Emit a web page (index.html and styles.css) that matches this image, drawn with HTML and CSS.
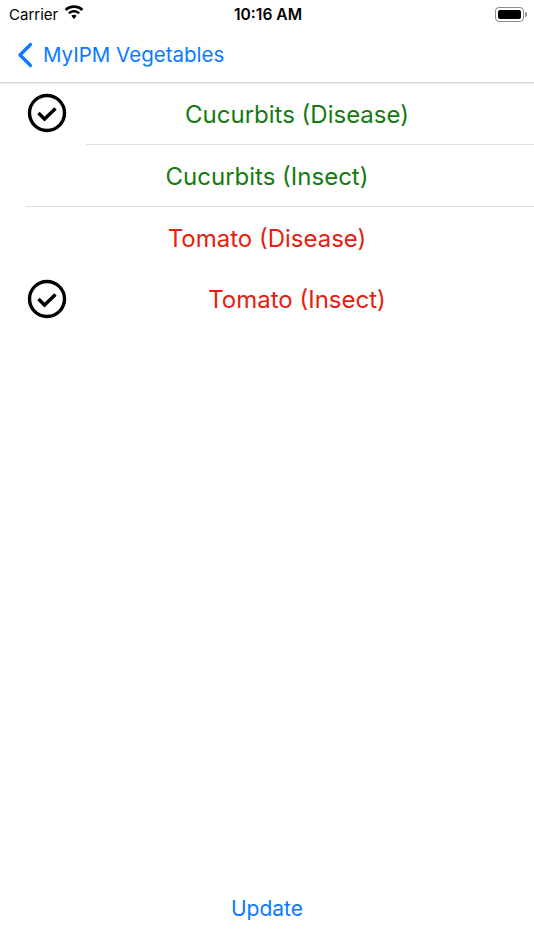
FILE: index.html
```html
<!DOCTYPE html>
<html lang="en">
<head>
    <meta charset="UTF-8">
    <meta name="viewport" content="width=device-width, initial-scale=1.0">
    <title>MyIPM Vegetables</title>
    <link rel="stylesheet" href="styles.css">
</head>
<body>
    <div class="screen">
        <!-- Status bar -->
        <div class="status-bar">
            <div class="status-left">
                <span class="carrier">Carrier</span>
                <svg class="wifi" width="20" height="15" viewBox="0 0 20 14">
                    <path d="M10 2.400c2.900 0 5.500 1.100 7.400 3l1.900-1.900C16.900 1.100 13.600-.2 10-.2S3.100 1.100.7 3.500l1.900 1.900c1.900-1.900 4.500-3 7.400-3z" fill="#000"/>
                    <path d="M10 7c1.600 0 3.100.6 4.200 1.700l1.800-1.900C14.400 5.300 12.300 4.400 10 4.400s-4.400.9-6 2.400l1.800 1.900C6.900 7.600 8.400 7 10 7z" fill="#000"/>
                    <path d="M10 9.200c-1 0-1.900.4-2.600 1L10 13.800l2.600-3.600c-.7-.6-1.600-1-2.600-1z" fill="#000"/>
                </svg>
            </div>
            <span class="clock">10:16 AM</span>
            <div class="battery">
                <div class="battery-body"><div class="battery-fill"></div></div>
                <div class="battery-cap"></div>
            </div>
        </div>

        <!-- Nav bar -->
        <div class="nav-bar">
            <svg class="back-icon" width="16" height="26" viewBox="0 0 16 26">
                <path d="M13.500 2.500 3 13l10.500 10.500" fill="none" stroke="#0a7aff" stroke-width="3.200" stroke-linecap="round" stroke-linejoin="round"/>
            </svg>
            <span class="nav-title">MyIPM Vegetables</span>
        </div>

        <!-- Crop list -->
        <div class="crop-list">
            <div class="crop-row">
                <div class="check-cell">
                    <svg width="40" height="40" viewBox="0 0 40 40">
                        <circle cx="20" cy="20" r="17.500" fill="none" stroke="#000" stroke-width="3.400"/>
                        <path d="M11.500 20 17.500 26 28.500 15.500" fill="none" stroke="#000" stroke-width="3.400"/>
                    </svg>
                </div>
                <div class="crop-name green line-checked">Cucurbits (Disease)</div>
            </div>
            <div class="crop-row">
                <div class="crop-name green line-plain">Cucurbits (Insect)</div>
            </div>
            <div class="crop-row">
                <div class="crop-name red">Tomato (Disease)</div>
            </div>
            <div class="crop-row">
                <div class="check-cell">
                    <svg width="40" height="40" viewBox="0 0 40 40">
                        <circle cx="20" cy="20" r="17.500" fill="none" stroke="#000" stroke-width="3.400"/>
                        <path d="M11.500 20 17.500 26 28.500 15.500" fill="none" stroke="#000" stroke-width="3.400"/>
                    </svg>
                </div>
                <div class="crop-name red shifted">Tomato (Insect)</div>
            </div>
        </div>

        <div class="update-btn">Update</div>
    </div>
</body>
</html>
```

FILE: styles.css
```css
* {
    margin: 0;
    padding: 0;
    box-sizing: border-box;
}

body {
    background: white;
    font-family: "Inter", "Liberation Sans", sans-serif;
}

.screen {
    width: 534px;
    height: 950px;
    display: flex;
    flex-direction: column;
    overflow: hidden;
}

.status-bar {
    height: 28px;
    padding: 0 7px 0 9px;
    display: flex;
    align-items: center;
    justify-content: space-between;
    font-size: 15px;
    color: #000;
}

.status-left {
    width: 110px;
    display: flex;
    align-items: center;
    gap: 6px;
}

.wifi {
    margin-top: -3px;
}

.clock {
    font-size: 15.600px;
    font-weight: 600;
}

.battery {
    width: 110px;
    display: flex;
    justify-content: flex-end;
    align-items: center;
    gap: 1px;
}

.battery-body {
    width: 29px;
    height: 15px;
    padding: 2px;
    border: 1px solid #8c8c8c;
    border-radius: 4px;
}

.battery-fill {
    height: 100%;
    background: #000;
    border-radius: 2px;
}

.battery-cap {
    width: 2px;
    height: 5px;
    background: #8c8c8c;
    border-radius: 0 2px 2px 0;
}

.nav-bar {
    height: 55px;
    padding-left: 17px;
    padding-bottom: 1px;
    display: flex;
    align-items: center;
    gap: 10px;
    border-bottom: 1px solid #d8d8d8;
    box-shadow: 0 1px 0 #ececec;
}

.nav-title {
    font-size: 20.500px;
    color: #0a7aff;
}

.crop-list {
    flex: 1;
}

.crop-row {
    height: 62px;
    display: flex;
    align-items: stretch;
}

.check-cell {
    width: 86px;
    flex-shrink: 0;
    padding-left: 27px;
    padding-bottom: 2px;
    display: flex;
    align-items: center;
}

.crop-name {
    flex: 1;
    display: flex;
    align-items: center;
    justify-content: center;
    font-size: 24px;
}

.green {
    color: #157a10;
}

.red {
    color: #e5200f;
}

.line-checked {
    border-bottom: 1px solid #e0e0e0;
    padding-top: 1px;
    padding-right: 26px;
}

.line-plain {
    border-bottom: 1px solid #e0e0e0;
    margin-left: 26px;
    padding-top: 1px;
    padding-right: 26px;
}

.shifted {
    padding-right: 26px;
    padding-bottom: 1px;
}

.update-btn {
    height: 84px;
    padding-top: 1px;
    text-align: center;
    font-size: 21px;
    line-height: 84px;
    color: #0a7aff;
}
```
